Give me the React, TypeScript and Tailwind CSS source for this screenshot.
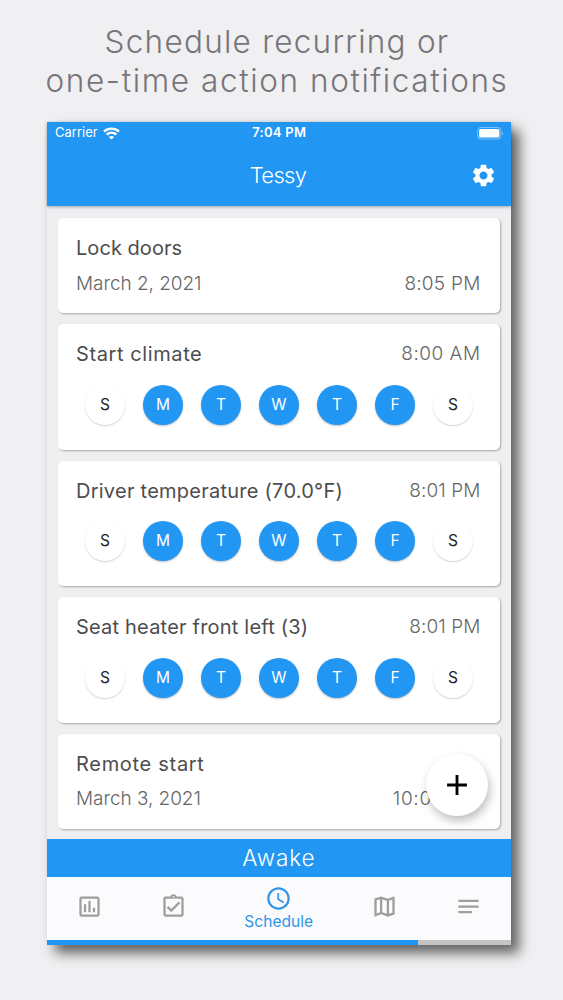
import { clsx } from "clsx";
import {
  MdAdd,
  MdNotes,
  MdOutlineAssessment,
  MdOutlineAssignmentTurnedIn,
  MdOutlineMap,
  MdSchedule,
  MdSettings,
} from "react-icons/md";

type ScheduleItem = {
  title: string;
  titleClass: string;
  time: string;
  timeClass: string;
  date?: string;
  days?: number[];
};

const DAYS = ["S", "M", "T", "W", "T", "F", "S"];
const WEEKDAYS = [1, 2, 3, 4, 5];

const ITEMS: ScheduleItem[] = [
  { title: "Lock doors", titleClass: "tracking-[0.05px]", time: "8:05 PM", timeClass: "tracking-[0.25px]", date: "March 2, 2021" },
  { title: "Start climate", titleClass: "tracking-[0.6px]", time: "8:00 AM", timeClass: "tracking-[0.5px]", days: WEEKDAYS },
  { title: "Driver temperature (70.0°F)", titleClass: "tracking-[0.25px]", time: "8:01 PM", timeClass: "tracking-[0.1px]", days: WEEKDAYS },
  { title: "Seat heater front left (3)", titleClass: "tracking-[0.2px]", time: "8:01 PM", timeClass: "tracking-[0.1px]", days: WEEKDAYS },
  { title: "Remote start", titleClass: "tracking-[0.7px]", time: "10:00 PM", timeClass: "tracking-[0.65px]", date: "March 3, 2021" },
];

function WifiIcon() {
  return (
    <svg width="17" height="13" viewBox="0 0 17 13" fill="none" stroke="white" strokeWidth="2.4">
      <path d="M1 4.6C5.2 .6 11.8 .6 16 4.6" />
      <path d="M3.7 7.6C6.5 5 10.5 5 13.3 7.6" />
      <path d="M8.5 12.6 5.9 9.9C7.4 8.6 9.6 8.6 11.1 9.9Z" fill="white" stroke="none" />
    </svg>
  );
}

function BatteryIcon() {
  return (
    <svg width="27" height="13" viewBox="0 0 27 13" fill="none">
      <rect x=".5" y=".5" width="23.4" height="11.6" rx="3" stroke="white" strokeOpacity=".4" />
      <rect x="2" y="2" width="20.4" height="8.6" rx="1.6" fill="white" />
      <path d="M25 4.5C26.5 5 26.5 7.6 25 8.1Z" fill="white" fillOpacity=".4" />
    </svg>
  );
}

function DayPicker({ active }: { active: number[] }) {
  return (
    <div className="flex justify-between pl-[9px] pr-[7.5px]">
      {DAYS.map((day, i) => (
        <span
          key={i}
          className={clsx(
            "flex h-10 w-10 items-center justify-center rounded-full text-[15.5px]",
            active.includes(i)
              ? "bg-[#2196f3] text-white shadow-[0_1px_2px_rgba(0,0,0,0.25)]"
              : "bg-white text-[#222] shadow-[0_1px_1.5px_rgba(0,0,0,0.18)]"
          )}
        >
          {day}
        </span>
      ))}
    </div>
  );
}

function ScheduleCard({ item }: { item: ScheduleItem }) {
  const time = <span className={clsx("pt-px text-[19px] font-light text-[#666]", item.timeClass)}>{item.time}</span>;
  return (
    <li
      className={clsx(
        "flex flex-col rounded-[5px] bg-white pl-[18px] pr-[19px] pt-[16px] shadow-[1px_1px_2px_rgba(0,0,0,0.3)]",
        item.days ? "h-[125.5px]" : "h-[95px]"
      )}
    >
      <div className="flex h-7 items-center justify-between whitespace-nowrap">
        <span className={clsx("text-[20px] text-[#4d4d4d]", item.titleClass)}>{item.title}</span>
        {item.days && time}
      </div>
      {item.days ? (
        <div className="mt-[16.5px]">
          <DayPicker active={item.days} />
        </div>
      ) : (
        <div className="mt-[7.5px] flex h-7 items-center justify-between whitespace-nowrap">
          <span className="pt-px text-[19px] font-light tracking-[-0.05px] text-[#666]">{item.date}</span>
          {time}
        </div>
      )}
    </li>
  );
}

export default function App() {
  return (
    <div className="h-[1000px] w-[563px] overflow-hidden bg-[#f0eff1] font-['Inter',sans-serif]">
      <h1 className="flex h-[122px] flex-col items-center whitespace-nowrap pr-[9px] pt-[22px] text-[31.5px] font-light leading-[39px] text-[#777579]">
        <span className="tracking-[1.25px]">Schedule recurring or</span>
        <span className="tracking-[1.6px]">one-time action notifications</span>
      </h1>

      <div className="ml-[47px] flex h-[823px] w-[463.5px] flex-col bg-[#efeef0] shadow-[8px_8px_12px_rgba(0,0,0,0.6)]">
        <header className="relative h-[84px] shrink-0 bg-[#2196f3] text-white shadow-[0_1px_3px_rgba(0,0,0,0.3)]">
          <div className="grid h-[22px] grid-cols-3 items-center pl-2 pr-[7px] text-[13px]">
            <span className="flex items-center gap-[5px]">
              Carrier <WifiIcon />
            </span>
            <span className="text-center font-semibold tracking-[0.3px]">7:04 PM</span>
            <span className="flex justify-end">
              <BatteryIcon />
            </span>
          </div>
          <div className="grid h-[62px] grid-cols-3 items-center pr-[13.5px]">
            <span />
            <span className="pl-[12px] text-center text-[22px] font-light tracking-[-0.7px]">Tessy</span>
            <span className="flex justify-end">
              <MdSettings size={27} />
            </span>
          </div>
        </header>

        <main className="relative h-[633px] shrink-0">
          <ul className="flex flex-col gap-[11px] pl-[11px] pr-[11px] pt-[12px]">
            {ITEMS.map((item) => (
              <ScheduleCard key={item.title} item={item} />
            ))}
          </ul>
          <button
            type="button"
            className="absolute bottom-[23px] right-[22.5px] flex h-[62px] w-[62px] items-center justify-center rounded-full bg-white text-black shadow-[2px_5px_10px_rgba(0,0,0,0.25)]"
          >
            <MdAdd size={34} />
          </button>
        </main>

        <div className="flex h-[38px] shrink-0 items-center justify-center bg-[#2196f3] text-[22.5px] font-light tracking-[0.9px] text-white">
          Awake
        </div>

        <nav className="grid h-[63px] shrink-0 grid-cols-[1fr_1fr_1.5fr_1fr_1fr] bg-[#fbfafc] text-[#9e9e9e]">
          <span className="flex items-center justify-center pb-[4px]">
            <MdOutlineAssessment size={27} />
          </span>
          <span className="flex items-center justify-center pb-[4px]">
            <MdOutlineAssignmentTurnedIn size={27} />
          </span>
          <span className="flex flex-col items-center pt-[8px] text-[15.6px] leading-[19px] text-[#3296e8]">
            <MdSchedule size={27} />
            Schedule
          </span>
          <span className="flex items-center justify-center pb-[4px]">
            <MdOutlineMap size={27} />
          </span>
          <span className="flex items-center justify-center pb-[4px]">
            <MdNotes size={27} />
          </span>
        </nav>

        <div className="h-[5px] shrink-0 bg-[#c4c4c4]">
          <div className="h-full w-[371px] bg-[#2196f3]" />
        </div>
      </div>
    </div>
  );
}
